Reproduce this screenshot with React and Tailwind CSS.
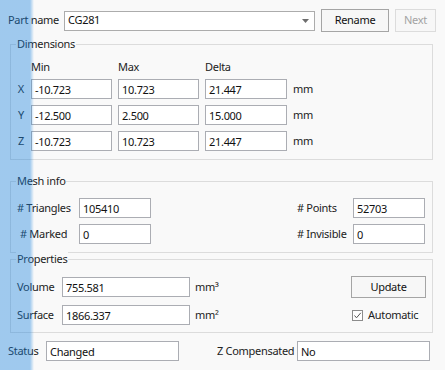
import React from "react";

function Field({ value, className = "" }) {
  return (
    <div
      className={`h-[20px] border border-[#abadb3] bg-white flex items-center pl-[3px] text-[#111] leading-none ${className}`}
    >
      {value}
    </div>
  );
}

function Group({ title, className = "", children }) {
  return (
    <div className={`ml-[2px] w-[423px] border border-[#dcdcdc] ${className}`}>
      <div className="-mt-[8px] ml-[5px] w-fit px-[1px] bg-[#f9f9f9] leading-[14px] text-[#1e1e1e]">
        {title}
      </div>
      {children}
    </div>
  );
}

export default function App() {
  return (
    <div className="relative w-[445px] h-[370px] overflow-hidden whitespace-nowrap bg-[#f9f9f9] font-['Noto_Sans',sans-serif] text-[11px] tracking-[-0.3px] text-[#222]">
      <div className="pl-[8px] pt-[9px]">
        {/* Part name row */}
        <div className="flex items-center h-[23px]">
          <div className="w-[56px]">Part name</div>
          <div className="w-[251px] h-[20px] border border-[#acacac] bg-white flex items-center justify-between pl-[3px] pr-[5px] text-[#111]">
            <span>CG281</span>
            <svg width="7" height="4" viewBox="0 0 7 4">
              <polygon points="0,0 7,0 3.5,4" fill="#6d6d6d" />
            </svg>
          </div>
          <div className="ml-[6px] w-[68px] h-[23px] border border-[#a5a5a5] bg-[#f7f7f7] flex items-center justify-center text-[#111]">
            Rename
          </div>
          <div className="ml-[6px] w-[41px] h-[23px] border border-[#dcdcdc] bg-[#f7f7f7] flex items-center justify-center text-[#a3a3a3]">
            Next
          </div>
        </div>

        {/* Dimensions */}
        <Group title="Dimensions" className="mt-[12px] h-[116px]">
          <div className="mt-[9px] grid grid-cols-[14px_81px_81px_82px_auto] gap-x-[6px] gap-y-[6px] items-center">
            <div />
            <div className="leading-[14px] -mb-[1px]">Min</div>
            <div className="leading-[14px] -mb-[1px]">Max</div>
            <div className="leading-[14px] -mb-[1px]">Delta</div>
            <div />

            <div className="text-right pr-[1px]">X</div>
            <Field value="-10.723" />
            <Field value="10.723" />
            <Field value="21.447" />
            <div>mm</div>

            <div className="text-right pr-[1px]">Y</div>
            <Field value="-12.500" />
            <Field value="2.500" />
            <Field value="15.000" />
            <div>mm</div>

            <div className="text-right pr-[1px]">Z</div>
            <Field value="-10.723" />
            <Field value="10.723" />
            <Field value="21.447" />
            <div>mm</div>
          </div>
        </Group>

        {/* Mesh info */}
        <Group title="Mesh info" className="mt-[21px] h-[72px]">
          <div className="mt-[10px] flex flex-col gap-[6px] pl-[6px] pr-[7px]">
            <div className="flex items-center">
              <div className="w-[62px]"># Triangles</div>
              <Field value="105410" className="w-[72px]" />
              <div className="flex-1" />
              <div className="w-[56px]"># Points</div>
              <Field value="52703" className="w-[72px]" />
            </div>
            <div className="flex items-center">
              <div className="w-[62px] pl-[3px]"># Marked</div>
              <Field value="0" className="w-[72px]" />
              <div className="flex-1" />
              <div className="w-[56px]"># Invisible</div>
              <Field value="0" className="w-[72px]" />
            </div>
          </div>
        </Group>

        {/* Properties */}
        <Group title="Properties" className="mt-[6px] h-[74px]">
          <div className="mt-[10px] flex flex-col gap-[6px] pl-[6px] pr-[6px]">
            <div className="flex items-center h-[22px]">
              <div className="w-[45px]">Volume</div>
              <Field value="755.581" className="w-[128px]" />
              <div className="ml-[5px]">mm³</div>
              <div className="flex-1" />
              <div className="w-[75px] h-[22px] border border-[#a5a5a5] bg-[#f7f7f7] flex items-center justify-center text-[#111]">
                Update
              </div>
            </div>
            <div className="flex items-center h-[22px]">
              <div className="w-[45px]">Surface</div>
              <Field value="1866.337" className="w-[128px]" />
              <div className="ml-[5px]">mm²</div>
              <div className="flex-1" />
              <div className="w-[75px] flex items-center">
                <div className="ml-[1px] w-[11px] h-[11px] border border-[#8c8c8c] bg-white flex items-center justify-center">
                  <svg width="9" height="9" viewBox="0 0 9 9">
                    <polyline points="1.5,4.5 3.5,6.8 7.8,1.8" fill="none" stroke="#555" strokeWidth="1" />
                  </svg>
                </div>
                <div className="ml-[5px]">Automatic</div>
              </div>
            </div>
          </div>
        </Group>

        {/* Status row */}
        <div className="mt-[8px] flex items-center h-[20px]">
          <div className="w-[38px]">Status</div>
          <Field value="Changed" className="w-[133px]" />
          <div className="ml-[38px] w-[80px]">Z Compensated</div>
          <Field value="No" className="w-[133px]" />
        </div>
      </div>

      {/* blue highlight strip */}
      <div className="pointer-events-none absolute left-0 top-0 h-full w-[34px] bg-[linear-gradient(to_right,rgba(24,129,221,0.4)_30px,rgba(24,129,221,0)_34px)]" />
    </div>
  );
}
